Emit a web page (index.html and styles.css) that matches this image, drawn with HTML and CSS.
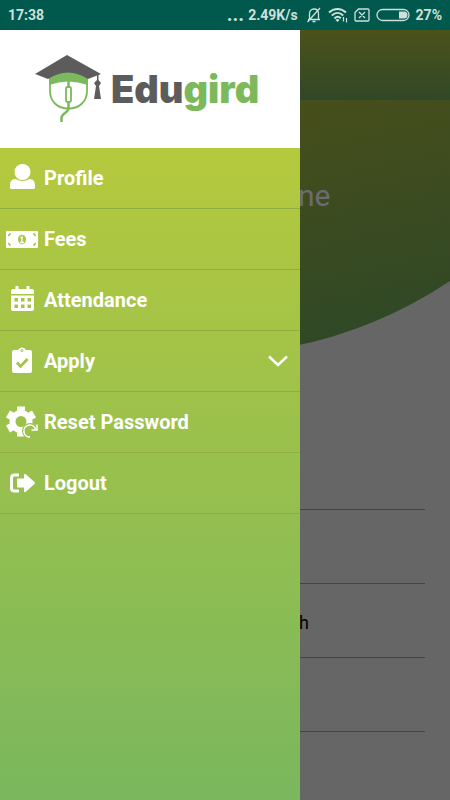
FILE: index.html
```html
<!DOCTYPE html>
<html lang="en">
<head>
    <meta charset="utf-8">
    <meta name="viewport" content="width=device-width, initial-scale=1">
    <title>Edugird</title>
    <link rel="stylesheet" href="styles.css">
</head>
<body>
    <header class="status">
        <span class="time">17:38</span>
        <span class="dots">...</span>
        <span>2.49K/s</span>
        <svg class="bell" width="16" height="16" viewBox="0 0 16 16" fill="none" stroke="currentColor" stroke-width="1.300">
            <path d="M2 12.500h12M3.500 12V7c0-3 1.500-5 4.500-5s4.500 2 4.500 5v5M6.500 14.500h3M14 1L1.500 15"/>
        </svg>
        <svg class="wifi" width="20" height="16" viewBox="0 0 20 16" fill="none" stroke="currentColor" stroke-width="2">
            <path d="M1 5.500C6 .8 13 .8 18 5.500M3.800 8.500c3.500-3.300 8-3.300 11.400 0M6.500 11.500c2-2 4.500-2 6.300-.3"/>
            <path d="M7.500 13a3 3 0 0 1 4 0l-2 2z" fill="currentColor" stroke="none"/>
            <path d="M15.500 10v4.500M18.500 11v4.500" stroke-width="1.200"/>
        </svg>
        <svg class="sim" width="16" height="14" viewBox="0 0 16 14" fill="none" stroke="currentColor" stroke-width="1.300">
            <path d="M4.500 1H14q1 0 1 1v10q0 1-1 1H2q-1 0-1-1V4.500zM5 4l6 6M11 4l-6 6"/>
        </svg>
        <svg class="battery" width="34" height="14" viewBox="0 0 34 14">
            <rect x="1" y="1.500" width="32" height="11" rx="5.500" fill="none" stroke="currentColor" stroke-width="1.300"/>
            <path d="M23 3.500h5a3.500 3.500 0 0 1 0 7h-5z" fill="currentColor"/>
        </svg>
        <span>27%</span>
    </header>

    <div class="screen">
        <main class="page">
            <div class="toolbar"></div>
            <section class="hero"><p>ne</p></section>
            <section class="details">
                <div class="field"></div>
                <div class="field"></div>
                <div class="field">h</div>
                <div class="field"></div>
            </section>
        </main>

        <aside class="drawer">
            <div class="brand">
                <svg width="68" height="70" viewBox="0 0 68 70">
                    <g fill="none" stroke="#7cb95c">
                        <path d="M15 25v12c0 10 7 17.500 18.500 17.500S52 47 52 37V25" stroke-width="1.800"/>
                        <path d="M33.500 27v6M33.500 48v6c0 5-7 5-7 10v4" stroke-width="2.500"/>
                        <rect x="31" y="33" width="5" height="15" rx="1.500" stroke-width="1.800" fill="#fff"/>
                    </g>
                    <path d="M14 23q19.500-12 39 0v8Q33 24 14 31z" fill="#7cb95c"/>
                    <path d="M32 1l34 19-13 5q-20-13-40 0L0 20z" fill="#5c5c5c"/>
                    <path d="M62 20h1.500v6l2.500 3-2 3 2 13h-7l2-13-2-3 3-3z" fill="#5c5c5c"/>
                </svg>
                <h1>Edu<span>gird</span></h1>
            </div>
            <nav>
                <a href="#profile">
                    <svg width="32" height="32" viewBox="0 0 32 32" fill="currentColor">
                        <circle cx="16.500" cy="10" r="8"/>
                        <path d="M9.500 17q7 4 14 0c4 0 5.500 3 5.500 6v2.500q0 1.500-1.500 1.500h-22Q4 27 4 25.500V23c0-3 1.500-6 5.500-6z"/>
                    </svg>
                    Profile
                </a>
                <a href="#fees">
                    <svg width="32" height="32" viewBox="0 0 32 32">
                        <rect y="8" width="32" height="17" rx="1" fill="currentColor"/>
                        <g fill="none" stroke="#abc644" stroke-width="1.500">
                            <path d="M2 12.500q2 0 2-2.500M30 12.500q-2 0-2-2.500M2 20.500q2 0 2 2.500M30 20.500q-2 0-2 2.500"/>
                        </g>
                        <ellipse cx="16" cy="16.500" rx="4" ry="4.800" fill="#abc644"/>
                        <path d="M14.500 15l1.500-1v5M14 19.500h4" fill="none" stroke="currentColor" stroke-width="1.300"/>
                    </svg>
                    Fees
                </a>
                <a href="#attendance">
                    <svg width="32" height="32" viewBox="0 0 32 32" fill="currentColor">
                        <path d="M9.500 2h3v3h8V2h3v3H26q2 0 2 2v3H5V7q0-2 2-2h2.500z"/>
                        <path fill-rule="evenodd" d="M5 11.500h23V25q0 2-2 2H7q-2 0-2-2zM8.500 14v3.500H12V14zM15 14v3.500h3.500V14zM21.500 14v3.500H25V14zM8.500 20.500V24H12v-3.500zM15 20.500V24h3.500v-3.500zM21.500 20.500V24H25v-3.500z"/>
                    </svg>
                    Attendance
                </a>
                <a href="#apply">
                    <svg width="32" height="32" viewBox="0 0 32 32">
                        <path d="M8 5h4q1-2.500 4-2.500T20 5h4q2 0 2 2v19q0 2-2 2H8q-2 0-2-2V7q0-2 2-2z" fill="currentColor"/>
                        <g fill="none" stroke="#a2c44a">
                            <path d="M11 17.500l3.500 4 7-7.500" stroke-width="2.800"/>
                            <circle cx="16" cy="5.500" r="1" stroke-width="1"/>
                        </g>
                    </svg>
                    Apply
                    <svg class="chevron" width="20" height="12" viewBox="0 0 20 12" fill="none" stroke="currentColor" stroke-width="2.500">
                        <path d="M1 1.500l9 8.500 9-8.500"/>
                    </svg>
                </a>
                <a href="#reset">
                    <svg width="32" height="32" viewBox="0 0 32 32">
                        <g fill="none" stroke="currentColor">
                            <circle cx="15" cy="15.500" r="8.500" stroke-width="6"/>
                            <path d="M15 4.500V.5M15 26.500v4M5.500 10L2 8M24.500 10L28 8M5.500 21L2 23M24.500 21l3.500 2" stroke-width="8"/>
                        </g>
                        <circle cx="24" cy="25" r="8" fill="#9cc24d"/>
                        <path d="M24 31a6 6 0 1 1 5.500-8M31 18.500V24h-5.500" fill="none" stroke="currentColor" stroke-width="1.500"/>
                    </svg>
                    Reset Password
                </a>
                <a href="#logout">
                    <svg width="32" height="32" viewBox="0 0 32 32">
                        <path d="M13 8H8.500Q5.500 8 5.500 11v10q0 3 3 3H13" fill="none" stroke="currentColor" stroke-width="3"/>
                        <path d="M11 12.500q0-1 1-1h6V8q0-1.500 1.500-1l9 8q1 1 0 2l-9 8q-1.500.8-1.500-1v-3.500h-6q-1 0-1-1z" fill="currentColor"/>
                    </svg>
                    Logout
                </a>
            </nav>
        </aside>
    </div>
</body>
</html>
```
FILE: styles.css
```css
* {
    box-sizing: border-box;
}

body {
    margin: 0;
    min-height: 100vh;
    display: flex;
    flex-direction: column;
    font-family: Roboto, sans-serif;
    background: #666;
}

.status {
    height: 30px;
    padding: 0 8px;
    display: flex;
    align-items: center;
    gap: 6px;
    background: #00594c;
    color: #cfe0dc;
    font-size: 14px;
    font-weight: 700;
}

.status .time {
    margin-right: auto;
}

.status .dots {
    font-size: 20px;
    line-height: 20px;
    margin: 0 -2px 2px 0;
}

.status .bell {
    margin-left: 2px;
}

.screen {
    position: relative;
    flex: 1;
}

/* page, dimmed while the drawer is open */
.toolbar {
    height: 70px;
    background: linear-gradient(#4b521a, #304827);
}

.hero {
    height: 260px;
    padding: 78px 0 0 298px;
    background: linear-gradient(168deg, #464e1b 20%, #2f4827 90%);
    clip-path: circle(436px at 46% -181px);
}

.hero p {
    margin: 0;
    font-size: 30px;
    line-height: 36px;
    color: #6c6c70;
}

.details {
    padding: 76px 25px 0;
}

.field {
    height: 74px;
    padding: 27px 0 0 274px;
    border-bottom: 1px solid #444;
    font-size: 18px;
    line-height: 24px;
    color: #000;
}

/* navigation drawer */
.drawer {
    position: absolute;
    top: 0;
    bottom: 0;
    left: 0;
    width: 300px;
    background: linear-gradient(#b5c93d 118px, #7ab75e);
}

.brand {
    height: 118px;
    padding: 0 35px;
    display: flex;
    align-items: center;
    gap: 8px;
    background: #fff;
}

.brand h1 {
    margin: 0;
    font-family: Inter, sans-serif;
    font-size: 38px;
    font-weight: 900;
    color: #5c5c5c;
}

.brand span {
    color: #7cb95c;
}

nav a {
    height: 61px;
    padding: 0 12px 0 6px;
    display: flex;
    align-items: center;
    gap: 6px;
    border-bottom: 1px solid #8fae42;
    color: #fff;
    font-size: 20px;
    font-weight: 700;
    text-decoration: none;
}

nav .chevron {
    margin-left: auto;
}
```
